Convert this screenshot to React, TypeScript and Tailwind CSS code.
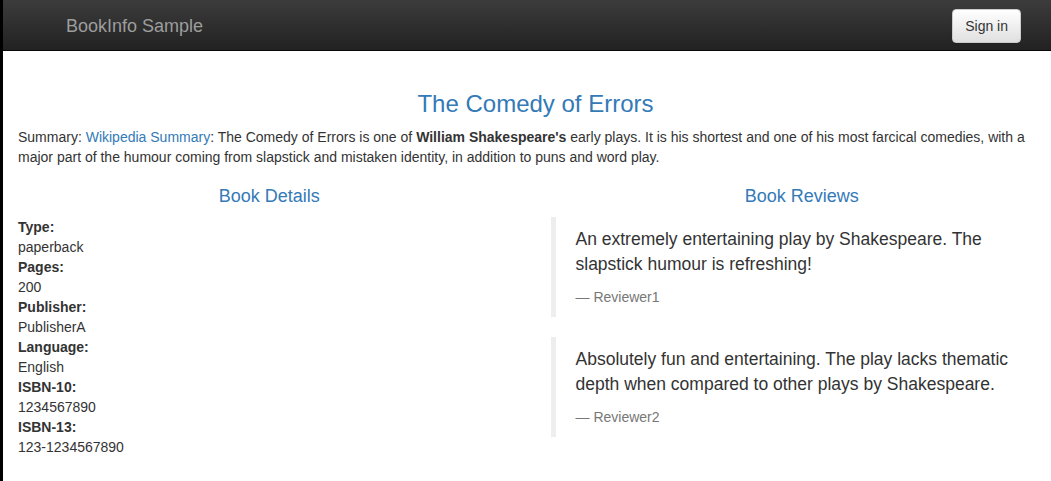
import React from "react";

type Detail = {
  label: string;
  value: string;
};

const details: Detail[] = [
  { label: "Type:", value: "paperback" },
  { label: "Pages:", value: "200" },
  { label: "Publisher:", value: "PublisherA" },
  { label: "Language:", value: "English" },
  { label: "ISBN-10:", value: "1234567890" },
  { label: "ISBN-13:", value: "123-1234567890" },
];

const reviews = [
  {
    text: "An extremely entertaining play by Shakespeare. The slapstick humour is refreshing!",
    reviewer: "Reviewer1",
  },
  {
    text: "Absolutely fun and entertaining. The play lacks thematic depth when compared to other plays by Shakespeare.",
    reviewer: "Reviewer2",
  },
];

const App = () => {
  return (
    <div className="min-h-screen overflow-hidden border-l-[3px] border-black bg-white font-['Liberation_Sans',Arial,sans-serif] text-[14px] leading-[20px] text-[#333]">
      {/* navbar */}
      <nav className="flex h-[51px] items-start justify-between border-b border-[#080808] bg-linear-to-b from-[#3c3c3c] to-[#222] pl-[63px] pr-[30px]">
        <span className="pt-[16px] text-[18px] leading-[20px] text-[#9d9d9d]">
          BookInfo Sample
        </span>
        <button className="mt-[9px] h-[34px] rounded-[4px] border border-[#ccc] bg-linear-to-b from-white to-[#e0e0e0] px-[12px] text-[14px] leading-[20px] text-[#333] shadow-[inset_0_1px_0_rgba(255,255,255,0.15),0_1px_1px_rgba(0,0,0,0.075)]">
          Sign in
        </button>
      </nav>

      <div className="w-[1065px] px-[15px] pt-[40px]">
        <h3 className="mb-[10px] text-center text-[24px] leading-[1.1] text-[#337ab7]">
          The Comedy of Errors
        </h3>
        <p className="mb-[10px]">
          Summary: <a className="text-[#337ab7]">Wikipedia Summary</a>: The
          Comedy of Errors is one of <b>William Shakespeare's</b> early plays.
          It is his shortest and one of his most farcical comedies, with a major
          part of the humour coming from slapstick and mistaken identity, in
          addition to puns and word play.
        </p>

        <div className="grid grid-cols-2 gap-[30px]">
          <div>
            <h4 className="my-[10px] text-center text-[18px] leading-[1.1] text-[#337ab7]">
              Book Details
            </h4>
            <dl>
              {details.map((d) => (
                <React.Fragment key={d.label}>
                  <dt className="font-bold">{d.label}</dt>
                  <dd>{d.value}</dd>
                </React.Fragment>
              ))}
            </dl>
          </div>

          <div>
            <h4 className="my-[10px] text-center text-[18px] leading-[1.1] text-[#337ab7]">
              Book Reviews
            </h4>
            {reviews.map((r) => (
              <blockquote
                key={r.reviewer}
                className="mb-[20px] border-l-[5px] border-[#eee] px-[20px] py-[10px] text-[17.5px] leading-[25px]"
              >
                <p className="mb-[10px]">{r.text}</p>
                <footer className="text-[14px] leading-[20px] text-[#777]">
                  — {r.reviewer}
                </footer>
              </blockquote>
            ))}
          </div>
        </div>
      </div>
    </div>
  );
};

export default App;
